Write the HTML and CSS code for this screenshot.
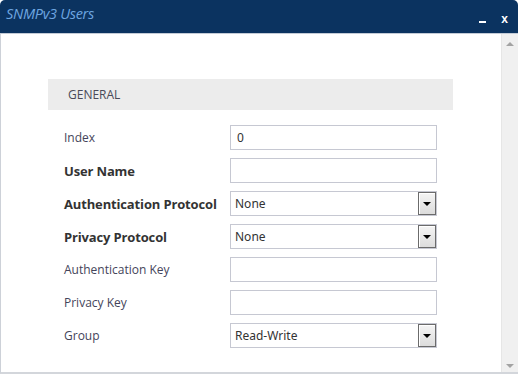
FILE: index.html
```html
<!DOCTYPE html>
<html>
<head>
<meta charset="utf-8">
<link rel="stylesheet" href="styles.css">
</head>
<body>
<div class="window">
  <div class="titlebar">
    <span class="title">SNMPv3 Users</span>
    <span class="controls"><span class="min"></span><span class="close">x</span></span>
  </div>
  <div class="content">
    <div class="main">
      <div class="section">GENERAL</div>
      <div class="form">
        <div class="label">Index</div>
        <div class="field"><span class="val">0</span></div>
        <div class="label bold">User Name</div>
        <div class="field"></div>
        <div class="label bold">Authentication Protocol</div>
        <div class="field select"><span class="val">None</span><span class="btn"></span></div>
        <div class="label bold">Privacy Protocol</div>
        <div class="field select"><span class="val">None</span><span class="btn"></span></div>
        <div class="label">Authentication Key</div>
        <div class="field"></div>
        <div class="label">Privacy Key</div>
        <div class="field"></div>
        <div class="label">Group</div>
        <div class="field select"><span class="val">Read-Write</span><span class="btn"></span></div>
      </div>
    </div>
    <div class="scrollbar">
      <span class="arrow up"></span>
      <span class="arrow down"></span>
    </div>
  </div>
</div>
</body>
</html>
```
FILE: styles.css
```css
* { box-sizing: border-box; }
body {
  margin: 0;
  background: #fff;
  font-family: "Open Sans", "Noto Sans", sans-serif;
}
.window {
  width: 518px;
}
.titlebar {
  height: 34px;
  background: #0b3360;
  border-radius: 5px 5px 0 0;
  border-bottom: 1px solid #c3cbd6;
  display: flex;
  justify-content: space-between;
  align-items: flex-start;
  padding: 0 0 0 6px;
}
.title {
  font-style: italic;
  font-size: 14.5px;
  color: #6ea6e0;
  margin-top: 4px;
  letter-spacing: -0.3px;
}
.controls {
  display: flex;
  align-items: center;
  margin-top: 12px;
}
.min {
  width: 7px;
  height: 2px;
  background: #fff;
  margin-right: 15px;
  margin-top: 6px;
}
.close {
  color: #fff;
  font-weight: bold;
  font-size: 12px;
  font-family: "Liberation Sans", sans-serif;
  margin-right: 10px;
}
.content {
  display: flex;
  height: 340px;
  border-left: 1px solid #cdd1d8;
  border-bottom: 2px solid #d3d6db;
}
.main {
  flex: 1;
  padding: 45px 0 0 47px;
}
.section {
  width: 405px;
  height: 31px;
  background: #ececec;
  font-size: 12px;
  color: #4a4a58;
  padding: 7px 0 0 20px;
}
.form {
  display: grid;
  grid-template-columns: 166px 207px;
  row-gap: 8px;
  margin-top: 15px;
  padding-left: 16px;
}
.label {
  font-size: 12px;
  color: #44445a;
  display: flex;
  align-items: center;
  height: 25px;
  white-space: nowrap;
}
.label.bold {
  font-weight: bold;
  font-size: 13px;
  color: #333;
  letter-spacing: -0.15px;
}
.field {
  height: 25px;
  border: 1px solid #c6c8d2;
  background: #fff;
  display: flex;
  align-items: center;
  justify-content: space-between;
  font-size: 12px;
  color: #333;
  font-family: "Noto Sans", "Open Sans", sans-serif;
}
.val { padding-left: 6px; }
.select .val { padding-left: 4px; }
.btn {
  width: 18px;
  height: 23px;
  border: 1px solid #6b6b6b;
  background: linear-gradient(#f4f4f4, #dcdcdc);
  position: relative;
  box-shadow: inset 1px 1px 0 #fff;
}
.btn::after {
  content: "";
  position: absolute;
  left: 4px;
  top: 9px;
  border-left: 4px solid transparent;
  border-right: 4px solid transparent;
  border-top: 4px solid #000;
}
.scrollbar {
  width: 17px;
  background: #f0f0f0;
  border-left: 1px solid #e6e6e6;
  position: relative;
}
.arrow {
  position: absolute;
  left: 4px;
  border-left: 4px solid transparent;
  border-right: 4px solid transparent;
}
.arrow.up { top: 8px; border-bottom: 4px solid #a3a3a3; }
.arrow.down { bottom: 4px; border-top: 4px solid #a3a3a3; }
```
